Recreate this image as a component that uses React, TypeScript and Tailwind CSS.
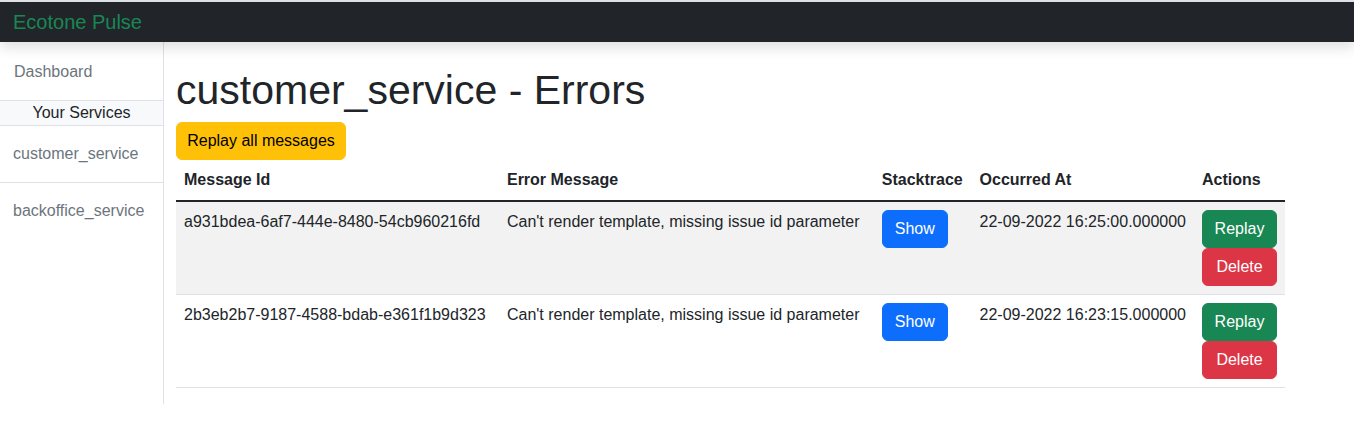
import React from 'react';

type ErrorRow = {
  id: string;
  message: string;
  occurredAt: string;
};

const rows: ErrorRow[] = [
  { id: 'a931bdea-6af7-444e-8480-54cb960216fd', message: "Can't render template, missing issue id parameter", occurredAt: '22-09-2022 16:25:00.000000' },
  { id: '2b3eb2b7-9187-4588-bdab-e361f1b9d323', message: "Can't render template, missing issue id parameter", occurredAt: '22-09-2022 16:23:15.000000' },
];

const services = ['customer_service', 'backoffice_service'];

export default function App() {
  return (
    <div className="bg-white text-[#212529] text-base" style={{ fontFamily: '"Liberation Sans", Arial, sans-serif' }}>
      {/* Navbar */}
      <nav className="relative z-10 h-[42px] border-t-2 border-[#dee2e6] bg-[#212529] flex items-center px-[13px] shadow-[0_6px_12px_rgba(0,0,0,0.12)]">
        <span className="text-[20px] text-[#198754] leading-none">Ecotone Pulse</span>
      </nav>

      <div className="flex">
        {/* Sidebar */}
        <aside className="w-[164px] shrink-0 border-r border-[#dee2e6]">
          <div className="px-[14px] pt-[18px] pb-[16px] text-[#6c757d] leading-6">Dashboard</div>
          <div className="border-y border-[#dee2e6] bg-[#f8f9fa] text-center leading-6 h-[26px]">Your Services</div>
          {services.map((s) => (
            <div key={s} className="px-[13px] py-4 leading-6 text-[#6c757d] border-b border-[#dee2e6] last:border-b-0">
              {s}
            </div>
          ))}
        </aside>

        {/* Main */}
        <main className="pl-[12px] pt-6 pb-4">
          <h1 className="text-[41px] font-medium leading-[48px] mb-2">customer_service - Errors</h1>
          <button className="bg-[#ffc107] text-black rounded-md px-[10px] py-[6px] leading-6 border border-[#ffc107] whitespace-nowrap w-[170px]">
            Replay all messages
          </button>

          <table className="w-[1109px] border-collapse text-left">
            <thead>
              <tr className="border-b-2 border-[#212529]">
                <th className="w-[324px] px-2 py-2 font-bold leading-6">Message Id</th>
                <th className="w-[376px] px-2 py-2 font-bold leading-6">Error Message</th>
                <th className="w-[98px] px-2 py-2 font-bold leading-6">Stacktrace</th>
                <th className="w-[221px] px-2 py-2 font-bold leading-6">Occurred At</th>
                <th className="px-2 py-2 font-bold leading-6">Actions</th>
              </tr>
            </thead>
            <tbody>
              {rows.map((r, i) => (
                <tr key={r.id} className={`border-b border-[#dee2e6] align-top ${i % 2 === 0 ? 'bg-[#f2f2f2]' : 'bg-white'}`}>
                  <td className="px-2 py-2 leading-6 whitespace-nowrap">{r.id}</td>
                  <td className="px-2 py-2 leading-6 whitespace-nowrap">{r.message}</td>
                  <td className="px-2 py-2">
                    <button className="bg-[#0d6efd] text-white rounded-md px-3 py-[6px] leading-6 border border-[#0d6efd] w-[66px]">Show</button>
                  </td>
                  <td className="px-2 py-2 leading-6 whitespace-nowrap">{r.occurredAt}</td>
                  <td className="px-2 py-2">
                    <div className="flex flex-col items-start">
                      <button className="bg-[#198754] text-white rounded-md py-[6px] leading-6 border border-[#198754] w-[75px] text-center">Replay</button>
                      <button className="bg-[#dc3545] text-white rounded-md py-[6px] leading-6 border border-[#dc3545] w-[75px] text-center">Delete</button>
                    </div>
                  </td>
                </tr>
              ))}
            </tbody>
          </table>
        </main>
      </div>
    </div>
  );
}
